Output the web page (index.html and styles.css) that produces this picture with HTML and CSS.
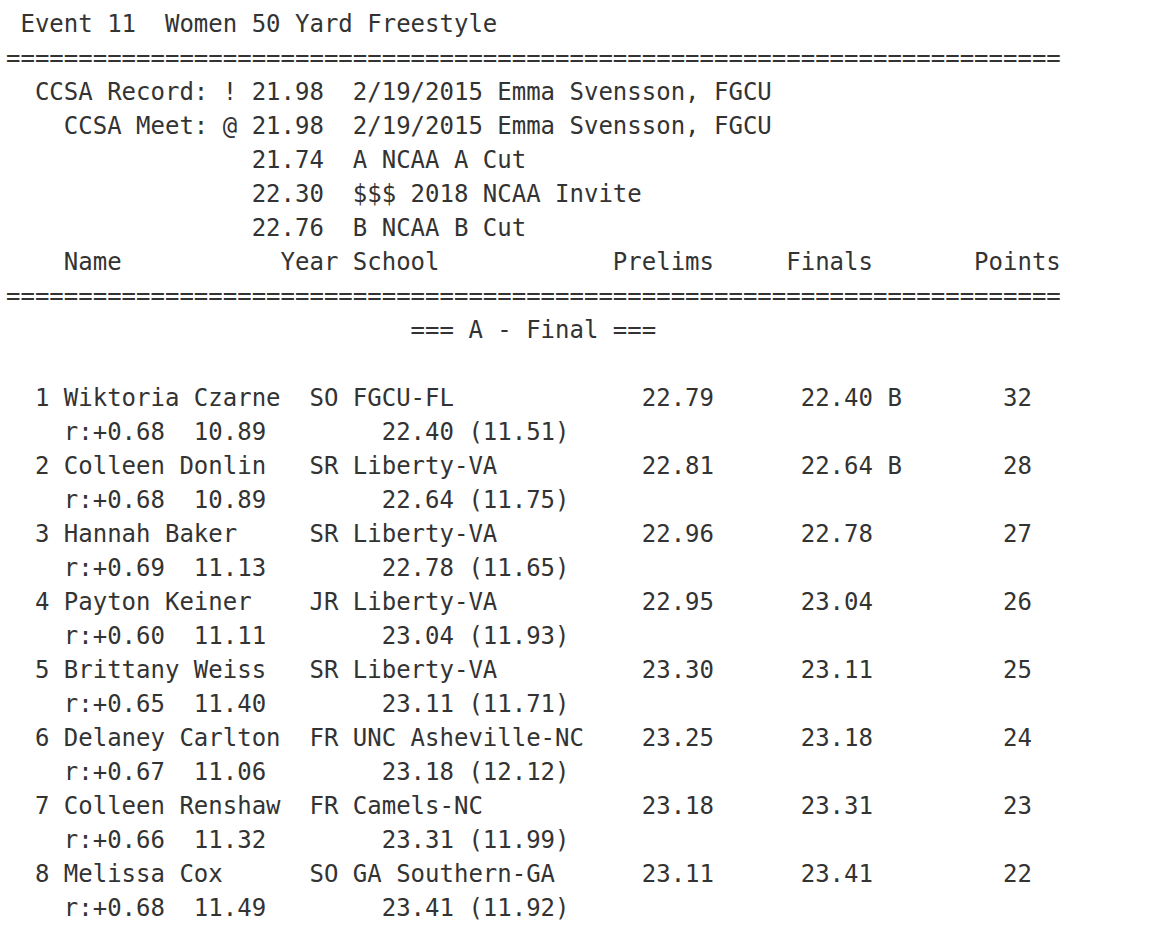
FILE: index.html
```html
<!DOCTYPE html>
<html lang="en">
<head>
<meta charset="utf-8">
<title>Event 11 Women 50 Yard Freestyle</title>
<link rel="stylesheet" href="styles.css">
</head>
<body class="page">
<pre class="results"> Event 11  Women 50 Yard Freestyle
=========================================================================
  CCSA Record: ! 21.98  2/19/2015 Emma Svensson, FGCU
    CCSA Meet: @ 21.98  2/19/2015 Emma Svensson, FGCU
                 21.74  A NCAA A Cut
                 22.30  $$$ 2018 NCAA Invite
                 22.76  B NCAA B Cut
    Name           Year School            Prelims     Finals       Points
=========================================================================
                            === A - Final ===

  1 Wiktoria Czarne  SO FGCU-FL             22.79      22.40 B       32
    r:+0.68  10.89        22.40 (11.51)
  2 Colleen Donlin   SR Liberty-VA          22.81      22.64 B       28
    r:+0.68  10.89        22.64 (11.75)
  3 Hannah Baker     SR Liberty-VA          22.96      22.78         27
    r:+0.69  11.13        22.78 (11.65)
  4 Payton Keiner    JR Liberty-VA          22.95      23.04         26
    r:+0.60  11.11        23.04 (11.93)
  5 Brittany Weiss   SR Liberty-VA          23.30      23.11         25
    r:+0.65  11.40        23.11 (11.71)
  6 Delaney Carlton  FR UNC Asheville-NC    23.25      23.18         24
    r:+0.67  11.06        23.18 (12.12)
  7 Colleen Renshaw  FR Camels-NC           23.18      23.31         23
    r:+0.66  11.32        23.31 (11.99)
  8 Melissa Cox      SO GA Southern-GA      23.11      23.41         22
    r:+0.68  11.49        23.41 (11.92)
</pre>
</body>
</html>
```
FILE: styles.css
```css
html {
  background: #ffffff;
}

.page {
  margin: 0;
  padding: 7px 8px 0 6px;
  background: #ffffff;
}

.results {
  margin: 0;
  font-family: "DejaVu Sans Mono", "Liberation Mono", monospace;
  font-size: 24px;
  line-height: 34px;
  color: #333333;
  white-space: pre;
}
```
